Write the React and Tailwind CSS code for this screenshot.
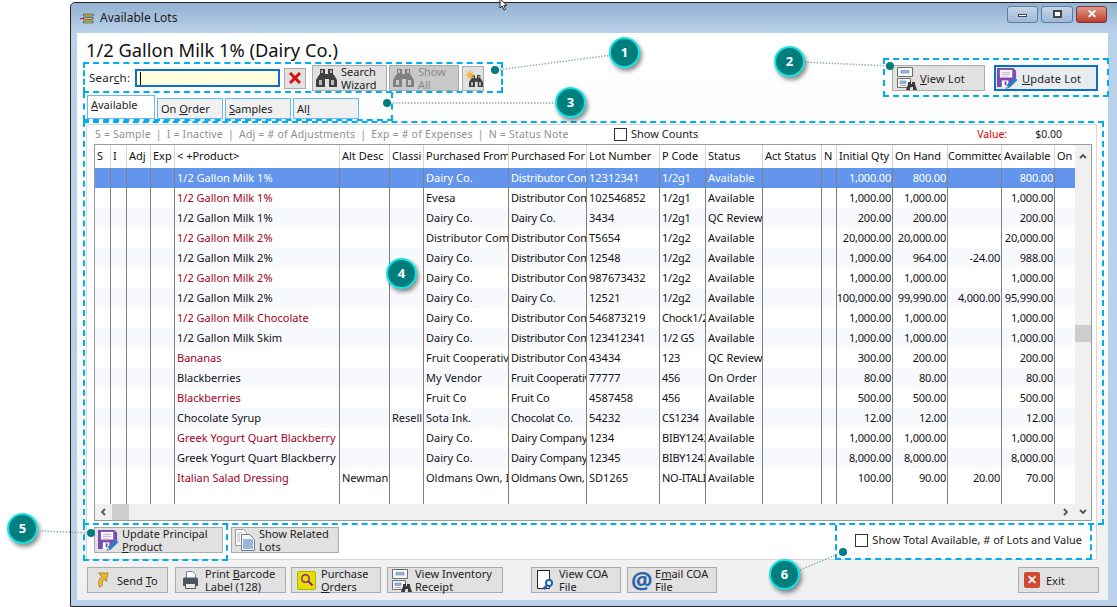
import React from "react";

const cols = ["w-[16px]","w-[16px]","w-[24px]","w-[24px]","w-[165px]","w-[50px]","w-[34px]","w-[85px]","w-[78px]","w-[73px]","w-[46px]","w-[57px]","w-[59px]","w-[15px]","w-[56px]","w-[55px]","w-[54px]","w-[53px]","w-[20px]"];
const heads = ["S","I","Adj","Exp","< +Product>","Alt Desc","Classi","Purchased From","Purchased For","Lot Number","P Code","Status","Act Status","N","Initial Qty","On Hand","Committed","Available","On"];
const rows = [
["1/2 Gallon Milk 1%","","","Dairy Co.","Distributor Company","12312341","1/2g1","Available","1,000.00","800.00","","800.00",0],
["1/2 Gallon Milk 1%","","","Evesa","Distributor Company","102546852","1/2g1","Available","1,000.00","1,000.00","","1,000.00",1],
["1/2 Gallon Milk 1%","","","Dairy Co.","Dairy Co.","3434","1/2g1","QC Review","200.00","200.00","","200.00",0],
["1/2 Gallon Milk 2%","","","Distributor Company","Distributor Company","T5654","1/2g2","Available","20,000.00","20,000.00","","20,000.00",1],
["1/2 Gallon Milk 2%","","","Dairy Co.","Distributor Company","12548","1/2g2","Available","1,000.00","964.00","-24.00","988.00",0],
["1/2 Gallon Milk 2%","","","Dairy Co.","Distributor Company","987673432","1/2g2","Available","1,000.00","1,000.00","","1,000.00",1],
["1/2 Gallon Milk 2%","","","Dairy Co.","Dairy Co.","12521","1/2g2","Available","100,000.00","99,990.00","4,000.00","95,990.00",0],
["1/2 Gallon Milk Chocolate","","","Dairy Co.","Distributor Company","546873219","Chock1/2","Available","1,000.00","1,000.00","","1,000.00",1],
["1/2 Gallon Milk Skim","","","Dairy Co.","Distributor Company","123412341","1/2 GS","Available","1,000.00","1,000.00","","1,000.00",0],
["Bananas","","","Fruit Cooperative","Distributor Company","43434","123","QC Review","300.00","200.00","","200.00",1],
["Blackberries","","","My Vendor","Fruit Cooperative","77777","456","On Order","80.00","80.00","","80.00",0],
["Blackberries","","","Fruit Co","Fruit Co","4587458","456","Available","500.00","500.00","","500.00",1],
["Chocolate Syrup","","Resell","Sota Ink.","Chocolat Co.","54232","CS1234","Available","12.00","12.00","","12.00",0],
["Greek Yogurt Quart Blackberry","","","Dairy Co.","Dairy Company","1234","BIBY1243","Available","1,000.00","1,000.00","","1,000.00",1],
["Greek Yogurt Quart Blackberry","","","Dairy Co.","Dairy Company","12345","BIBY1243","Available","8,000.00","8,000.00","","8,000.00",0],
["Italian Salad Dressing","Newman's","","Oldmans Own, Inc","Oldmans Own, Inc","SD1265","NO-ITALIAN","Available","100.00","90.00","20.00","70.00",1],
];

const Binoc = ({ c = "#3f3f3f", className = "" }) => (
  <svg viewBox="0 0 21 20" className={className}>
    <path fill={c} d="M4 1h5v5h3V1h5v5l1 1 3 5v7h-8v-8H9v8H0v-7l3-5 1-1z" />
    <path fill="#d8d8d8" d="M3 12h3v5H3zM15 12h3v5h-3zM5 2h2v3H5zM14 2h2v3h-2z" opacity=".8" />
  </svg>
);
const Floppy = () => (
  <svg viewBox="0 0 22 22" className="w-[21px] h-[21px] shrink-0">
    <path fill="#7b4bad" d="M0 0h17l3 3v7l-9 10H0z" />
    <path fill="#fff" d="M3 2h13v8H3z" /><path fill="#bfa8d8" d="M5 4h9v1H5zM5 6h9v1H5zM5 8h7v1H5z" />
    <path fill="#fff" d="M5 13h7v7H5z" /><path fill="#7b4bad" d="M8 14h2v4H8z" />
    <path fill="#2f78c4" d="M18.500 9.500l3 3-8 8-4.500 1.500 1.500-4.500z" />
    <path fill="#fff" d="M10.500 18.500l1.500 1.500-2 .6z" />
  </svg>
);
const DocBin = ({ s = "w-[20px] h-[23px]" }) => (
  <svg viewBox="0 0 20 23" className={`${s} shrink-0`}>
    <path fill="#f7f7f7" stroke="#6f6f6f" d="M.5.500h15v9H.500zM.5 11.500h13v9h-13z" />
    <path fill="#9db9d8" stroke="#5e88b5" strokeWidth=".6" d="M4 3.500h8v2.500H4zM3 14h6v2.500H3z" />
    <path stroke="#aaa" d="M3 18.500h6" />
    <path fill="#3a3a3a" d="M11 15h3v2h1v-2h3v2l2 6h-4v-3h-3v3h-4l2-6z" />
  </svg>
);
const Papers = () => (
  <svg viewBox="0 0 20 22" className="w-[20px] h-[22px] shrink-0">
    <path fill="#fff" stroke="#9a9a9a" d="M.5.500h8l3 3v13H.500z" />
    <path fill="#fff" stroke="#5a7fae" d="M6.500 5.500h8l5 5v11h-13z" />
    <path stroke="#3a6ea8" d="M8 11h10M8 13h10M8 15h10M8 17h10M8 19h10" />
    <path stroke="#b5b5b5" d="M2 4h5M2 6h3M2 8h3M2 10h3M2 12h3" />
  </svg>
);
const Btn = ({ x = "", children, icon, disabled, primary }) => (
  <div className={`flex items-center shrink-0 border leading-[13px] whitespace-nowrap ${primary ? "border-2 border-[#0a6fd0] bg-[#e9ecef] text-[#222]" : disabled ? "border-[#ababab] bg-[#c9c9c9] text-[#8a8a8a]" : "border-[#ababab] bg-[#e1e1e1] text-[#222]"} ${x}`}>
    {icon}
    <div>{children}</div>
  </div>
);
const Callout = ({ n, className }) => (
  <div className={`absolute w-[31px] h-[31px] rounded-full bg-[#007e7e] border-2 border-[#14e4e4] shadow-[2px_3px_4px_rgba(0,0,0,0.45)] flex items-center justify-center text-white font-bold text-[13px] ${className}`}>{n}</div>
);
const Dash = ({ className }) => (
  <div className={`absolute pointer-events-none border-dashed border-[#00aeef] ${className}`} />
);
const Check = () => <span className="inline-block w-[13px] h-[13px] border border-[#333] bg-white shrink-0" />;
const Tab = ({ children, active, w = "w-[66px]" }) => (
  <div className={`border border-[#69b7f5] text-[11px] shrink-0 pl-[3px] ${w} ${active ? "bg-white h-[24px] pt-[1px]" : "bg-[#f0f0f0] h-[21px] pt-[2px]"}`}>{children}</div>
);

export default function App() {
  return (
    <div className="relative w-[1117px] h-[607px] overflow-hidden bg-white font-['Noto_Sans',sans-serif] text-[11px] text-[#222]">
      <div className="ml-[70px] mt-[2px] w-[1060px] h-[605px] border border-[#222] rounded-t-[5px] bg-[#b9d1ea] flex flex-col">
        <div className="h-[30px] shrink-0 flex items-center pl-[9px] rounded-t-[5px] bg-gradient-to-b from-[#94b1d1] to-[#b9d1ea]">
          <svg viewBox="0 0 16 12" className="w-[14px] h-[11px] mr-[6px] shrink-0">
            <path fill="#ffe94a" stroke="#222" strokeWidth=".7" d="M4 1h11v2H4zM4 5h11v2H4zM4 9h11v2H4z" />
            <path stroke="#c00" d="M0 6h4" />
          </svg>
          <span className="text-[12px] text-[#1a1a1a] whitespace-nowrap">Available Lots</span>
          <div className="ml-auto mr-[22px] flex items-center gap-[3px] -mt-[8px]">
            <div className="w-[31px] h-[17px] rounded-[3px] border border-[#5e7c9e] bg-gradient-to-b from-[#c6d6e8] to-[#9db8d6] flex items-center justify-center"><span className="w-[9px] h-[3px] bg-white border border-[#444] mt-[3px]" /></div>
            <div className="w-[32px] h-[17px] rounded-[3px] border border-[#5e7c9e] bg-gradient-to-b from-[#c6d6e8] to-[#9db8d6] flex items-center justify-center"><span className="w-[9px] h-[8px] bg-white border-2 border-[#444]" /></div>
            <div className="w-[31px] h-[17px] rounded-[3px] border border-[#7a3a30] bg-gradient-to-b from-[#dc9a8c] to-[#c0392b] flex items-center justify-center text-white font-bold text-[12px] leading-none">✕</div>
          </div>
        </div>
        <div className="ml-[6px] w-[1031px] h-[567px] shrink-0 bg-gradient-to-b from-white via-[#fbfbfb] to-[#f0f0f0] flex flex-col">
          <div className="pl-[9px] mt-[6px] h-[22px] text-[18.300px] leading-[22px] text-[#111] whitespace-nowrap">1/2 Gallon Milk 1% (Dairy Co.)</div>
          <div className="mt-[4px] h-[26px] flex items-center pl-[12px] pr-[10px]">
            <span className="w-[46px] text-[11.500px] tracking-[0.25px]">Sear<u>c</u>h:</span>
            <div className="w-[145px] h-[18px] bg-[#ffffdc] border-2 border-[#0a6fd0] flex items-center pl-[3px]"><span className="w-px h-[13px] bg-black" /></div>
            <div className="ml-[4px] w-[22px] h-[21px] bg-[#e1e1e1] border border-[#ababab] flex items-center justify-center">
              <svg viewBox="0 0 12 12" className="w-[12px] h-[12px]"><path stroke="#d80f0f" strokeWidth="3" d="M1 1l10 10M11 1L1 11" /></svg>
            </div>
            <Btn x="ml-[6px] w-[75px] h-[26px] pl-[3px]" icon={<Binoc className="w-[21px] h-[20px] mr-[4px] shrink-0" />}>Search<br />Wizard</Btn>
            <Btn disabled x="ml-[2px] w-[70px] h-[26px] pl-[3px]" icon={<Binoc c="#808080" className="w-[21px] h-[20px] mr-[4px] shrink-0" />}>Show<br />All</Btn>
            <div className="ml-[3px] w-[22px] h-[25px] bg-[#e1e1e1] border border-[#ababab] relative">
              <Binoc className="absolute left-[6px] top-[7px] w-[14px] h-[14px]" />
              <svg viewBox="0 0 10 10" className="absolute left-[2px] top-[3px] w-[10px] h-[10px]"><circle cx="5" cy="5" r="2.500" fill="#f4b23c" /><path stroke="#f4b23c" d="M5 0v10M0 5h10M1.500 1.500l7 7M8.500 1.500l-7 7" /></svg>
            </div>
            <Btn x="ml-auto w-[93px] h-[26px] pl-[4px]" icon={<span className="mr-[3px] flex"><DocBin /></span>}><span className="tracking-[0.2px]"><u>V</u>iew Lot</span></Btn>
            <Btn primary x="ml-[9px] w-[104px] h-[26px] pl-[1px]" icon={<span className="mr-[4px] flex"><Floppy /></span>}><span className="tracking-[0.2px]"><u>U</u>pdate Lot</span></Btn>
          </div>
          <div className="mt-[5px] h-[24px] flex items-end gap-[2px] pl-[10px] pb-px">
            <Tab active w="w-[68px]"><u>A</u>vailable</Tab>
            <Tab>On <u>O</u>rder</Tab>
            <Tab><u>S</u>amples</Tab>
            <Tab>Al<u>l</u></Tab>
          </div>
          <div className="mt-[4px] ml-[9px] w-[1011px] h-[436px] border border-[#d8d8d8] bg-white flex flex-col">
            <div className="h-[19px] shrink-0 flex items-center pl-[8px] text-[10.500px] text-[#8f8f8f] tracking-[0.2px] whitespace-nowrap">
              <div className="flex gap-[5px]">
                <span>S = Sample</span><span>|</span><span>I = Inactive</span><span>|</span><span>Adj = # of Adjustments</span><span>|</span><span>Exp = # of Expenses</span><span>|</span><span>N = Status Note</span>
              </div>
              <div className="ml-auto flex items-center w-[482px] text-[#222] tracking-normal">
                <Check /><span className="ml-[4px] text-[11px]">Show Counts</span>
                <span className="ml-[279px] text-[#e00000]">Value:</span>
                <span className="ml-[28px] text-[#222]">$0.00</span>
              </div>
            </div>
            <div className="ml-[7px] w-[998px] h-[377px] shrink-0 border border-[#9a9a9a] flex flex-col">
              <div className="flex h-[359px] shrink-0">
                <div className="w-[980px] shrink-0 flex flex-col overflow-hidden">
                  <div className="flex h-[23px] shrink-0 bg-white text-[11px] text-[#111]">
                    {heads.map((h, i) => (
                      <div key={i} className={`${cols[i]} shrink-0 h-full border-r border-[#d5d5d5] last:border-r-0 overflow-hidden whitespace-nowrap flex items-center ${h === "Committed" ? "pl-0 tracking-[-0.2px]" : "pl-[2px]"}`}>{h}</div>
                    ))}
                  </div>
                  {rows.map((r, ri) => {
                    const sel = ri === 0;
                    const cells = ["", "", "", "", r[0], r[1], r[2], r[3], r[4], r[5], r[6], r[7], "", "", r[8], r[9], r[10], r[11], ""];
                    return (
                      <div key={ri} className={`flex h-[20px] shrink-0 ${sel ? "bg-[#6495ed] text-white" : ri % 2 === 0 ? "bg-[#f8f9fd] text-[#111]" : "bg-white text-[#111]"}`}>
                        {cells.map((c, i) => {
                          const right = i >= 14 && i <= 17;
                          const red = i === 4 && r[12] === 1;
                          return (
                            <div key={i} className={`${cols[i]} shrink-0 h-full border-r border-[#808080] last:border-r-0 overflow-hidden whitespace-nowrap flex items-center ${right ? "justify-end pr-px tracking-[-0.2px]" : "pl-[2px]"} ${i === 8 || i === 10 ? "tracking-[-0.25px]" : ""} ${red ? "text-[#a50021]" : ""}`}>{c}</div>
                          );
                        })}
                      </div>
                    );
                  })}
                  <div className="flex flex-1">
                    {cols.map((c, i) => <div key={i} className={`${c} shrink-0 h-full border-r border-[#808080] last:border-r-0`} />)}
                  </div>
                </div>
                <div className="w-[16px] shrink-0 bg-[#f0f0f0] flex flex-col items-center">
                  <svg viewBox="0 0 8 6" className="w-[8px] h-[6px] mt-[8px]"><path fill="none" stroke="#555" strokeWidth="1.800" d="M1 5l3-3 3 3" /></svg>
                  <div className="w-[16px] h-[17px] bg-[#cdcdcd] mt-[166px]" />
                </div>
              </div>
              <div className="h-[16px] shrink-0 bg-[#f0f0f0] flex items-center">
                <svg viewBox="0 0 6 8" className="w-[6px] h-[8px] ml-[5px]"><path fill="none" stroke="#555" strokeWidth="1.800" d="M5 1L2 4l3 3" /></svg>
                <div className="w-[17px] h-[16px] bg-[#cdcdcd] ml-[6px]" />
                <svg viewBox="0 0 6 8" className="w-[6px] h-[8px] ml-auto mr-[6px]"><path fill="none" stroke="#555" strokeWidth="1.800" d="M1 1l3 3-3 3" /></svg>
                <div className="w-[16px] flex justify-center"><svg viewBox="0 0 8 6" className="w-[8px] h-[6px]"><path fill="none" stroke="#555" strokeWidth="1.800" d="M1 1l3 3 3-3" /></svg></div>
              </div>
            </div>
            <div className="flex-1 flex items-center pl-[7px]">
              <Btn x="w-[129px] h-[26px] pl-[3px]" icon={<span className="mr-[3px] flex"><Floppy /></span>}>Update Principal<br /><u>P</u>roduct</Btn>
              <Btn x="ml-[8px] w-[108px] h-[26px] pl-[3px]" icon={<span className="mr-[4px] flex"><Papers /></span>}>Show Related<br />Lots</Btn>
              <div className="ml-auto mr-[14px] flex items-center">
                <Check /><span className="ml-[4px] text-[#222] whitespace-nowrap">Show Total Available, # of Lots and Value</span>
              </div>
            </div>
          </div>
          <div className="mt-[7px] h-[26px] flex pl-[10px]">
            <Btn x="w-[81px] h-[26px] pl-[8px]" icon={<svg viewBox="0 0 14 17" className="w-[13px] h-[16px] mr-[8px] shrink-0"><path fill="#eeb72c" stroke="#8a6d1a" strokeWidth=".7" d="M3 1h10L11 10 9 7.500C7 9 6.500 12 7 14l-3 2.500C2 13 2.500 8 6 5z" /></svg>}>Send <u>T</u>o</Btn>
            <Btn x="ml-[7px] w-[111px] h-[26px] pl-[6px]" icon={<svg viewBox="0 0 17 19" className="w-[17px] h-[19px] mr-[6px] shrink-0"><path fill="#fff" stroke="#6f86a8" d="M4.500.500h6l3 3v5h-9z" /><path fill="#4a5560" d="M1 8c0-1 1-1.500 2-1.500h11c1 0 2 .5 2 1.500v7H1z" /><path fill="#e8e8e8" stroke="#555" d="M3.500 12.500h10v5h-10z" /></svg>}>Print <u>B</u>arcode<br />Label (128)</Btn>
            <Btn x="ml-[5px] w-[90px] h-[26px] pl-[5px]" icon={<span className="mr-[5px] w-[19px] h-[19px] shrink-0 bg-[#e3e000] border border-[#b5b300] rounded-[2px] flex items-center justify-center"><svg viewBox="0 0 14 14" className="w-[14px] h-[14px]"><circle cx="5.500" cy="5.500" r="3.700" fill="none" stroke="#8a1a9a" strokeWidth="1.500" /><path stroke="#8a1a9a" strokeWidth="2" d="M8.500 8.500l4 4" /></svg></span>}>Purchase<br /><u>O</u>rders</Btn>
            <Btn x="ml-[6px] w-[116px] h-[26px] pl-[4px]" icon={<span className="mr-[3px] flex"><DocBin /></span>}>View Inventory<br />Receipt</Btn>
            <Btn x="ml-[28px] w-[90px] h-[26px] pl-[4px]" icon={<svg viewBox="0 0 20 22" className="w-[20px] h-[22px] mr-[3px] shrink-0"><path fill="#fff" stroke="#222" d="M1.500 1.500h12v18h-12z" /><circle cx="13" cy="14" r="3" fill="#fff" stroke="#1a5fb4" strokeWidth="2" /><path stroke="#1a5fb4" strokeWidth="2.500" d="M10.500 17l-3 3" /></svg>}>View COA<br />File</Btn>
            <Btn x="ml-[6px] w-[90px] h-[26px] pl-[3px]" icon={<span className="w-[21px] mr-[3px] shrink-0 text-[#2d66a8] text-[24px] font-bold leading-[24px] text-center">@</span>}>E<u>m</u>ail COA<br />File</Btn>
            <Btn x="ml-auto mr-[9px] w-[81px] h-[26px] pl-[5px]" icon={<span className="w-[16px] h-[16px] mr-[6px] rounded-[2px] bg-[#cf4a32] text-white text-[12px] font-bold flex items-center justify-center leading-none">✕</span>}>Exit</Btn>
          </div>
        </div>
      </div>

      <Dash className="left-[83px] top-[62px] w-[420px] h-[31px] border-2" />
      <Dash className="left-[83px] top-[92px] w-[310px] h-[29px] border-2 border-t-0" />
      <Dash className="left-[883px] top-[58px] w-[226px] h-[39px] border-2" />
      <Dash className="left-[83px] top-[121px] w-[1021px] h-[404px] border-2" />
      <Dash className="left-[83px] top-[524px] w-[145px] h-[37px] border-2 border-t-0" />
      <Dash className="left-[835px] top-[525px] w-[257px] h-[35px] border-2 border-t-0" />

      <svg className="absolute inset-0 w-[1117px] h-[607px] pointer-events-none" viewBox="0 0 1117 607">
        <g stroke="#8fb3b3" strokeWidth="1.500" strokeDasharray="1.500 1.500" fill="none">
          <path d="M497 70L612 55" /><path d="M890 66L802 62" /><path d="M387 103L558 103" /><path d="M91 533L40 531" /><path d="M843 552L800 570" />
        </g>
        <g fill="#007e7e">
          <circle cx="495" cy="70" r="4" /><circle cx="890" cy="66" r="4" /><circle cx="387" cy="103" r="4" /><circle cx="91" cy="533" r="4" /><circle cx="843" cy="552" r="4" />
        </g>
        <path d="M500 0v9l2.200-2 1.800 4 1.600-.8-1.800-3.800 3.200-.2z" transform="translate(0 -1)" fill="#fff" stroke="#222" strokeWidth="1" />
      </svg>
      <Callout n="1" className="left-[609px] top-[37px]" />
      <Callout n="2" className="left-[774px] top-[46px]" />
      <Callout n="3" className="left-[555px] top-[87px]" />
      <Callout n="4" className="left-[386px] top-[258px]" />
      <Callout n="5" className="left-[7px] top-[513px]" />
      <Callout n="6" className="left-[769px] top-[559px]" />
    </div>
  );
}
